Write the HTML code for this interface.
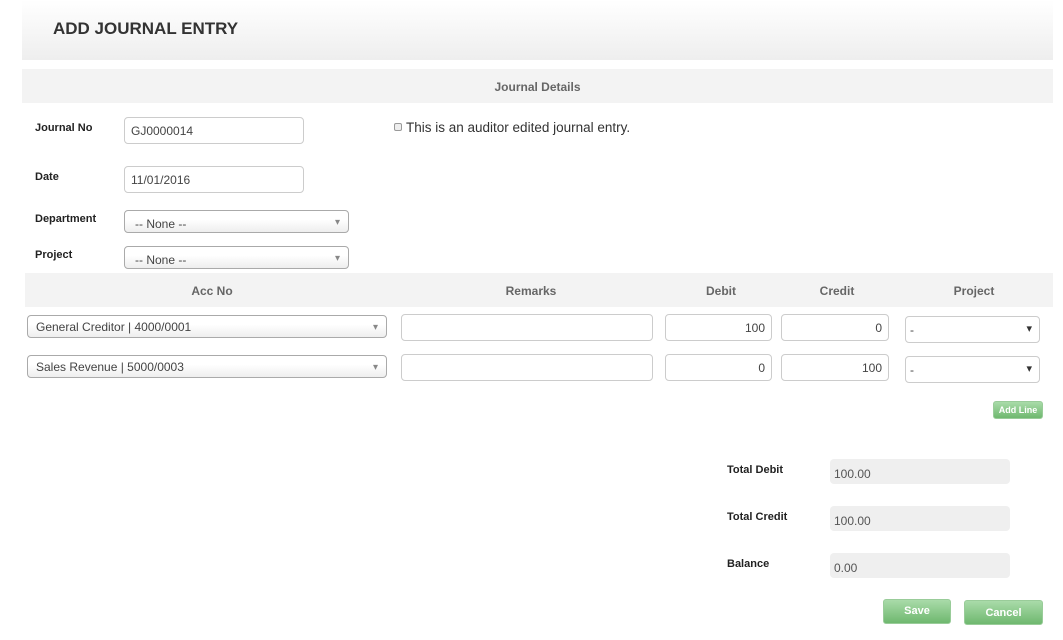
<!DOCTYPE html>
<html><head><meta charset="utf-8"><style>
*{box-sizing:border-box;margin:0;padding:0}
body{width:1063px;height:640px;background:#fff;font-family:"Liberation Sans",sans-serif;position:relative;overflow:hidden;color:#222}
.a{position:absolute}
.hdr{left:22px;top:0;width:1031px;height:60px;background:linear-gradient(#fff,#eee)}
.title{left:53px;top:19px;font-size:17px;font-weight:bold;color:#333}
.bar{left:22px;top:69px;width:1031px;height:34px;background:#f3f3f3}
.lbl{font-size:11px;font-weight:bold;color:#222}
.inp{border:1px solid #ccc;border-radius:4px;background:#fff;font-size:12px;color:#444;padding-left:6px;display:flex;align-items:center}
.sel{border:1px solid #aaa;border-radius:4px;background:linear-gradient(#fff 40%,#eee);font-size:12px;color:#444;padding:6px 0 0 10px}
.sel:after{content:"▾";position:absolute;right:8px;top:6px;font-size:10px;color:#888}
.num{justify-content:flex-end;padding-right:6px;padding-left:0}
.th{font-size:12px;font-weight:bold;color:#666;text-align:center}
.ps{border:1px solid #ccc;border-radius:4px;background:#fff;font-size:12px;color:#444;padding:6px 0 0 4px}
.ps:after{content:"▾";position:absolute;right:7px;top:5px;font-size:11px;color:#333}
.tot{background:#efefef;border-radius:4px;font-size:12px;color:#555;padding:8px 0 0 4px}
.btn{background:linear-gradient(#a9dba9,#6fb86f);border:1px solid #9c9;border-radius:3px;color:#fff;font-weight:bold;font-size:11px;text-align:center}
</style></head><body>
<div class="a hdr"></div>
<div class="a title">ADD JOURNAL ENTRY</div>
<div class="a bar"></div>
<div class="a" style="left:22px;top:80px;width:1031px;text-align:center;font-size:12px;font-weight:bold;color:#666">Journal Details</div>

<div class="a lbl" style="left:35px;top:122px">Journal No</div>
<div class="a inp" style="left:124px;top:117px;width:180px;height:27px">GJ0000014</div>
<div class="a" style="left:394px;top:123px;width:8px;height:8px;border:1px solid #999;border-radius:2px;background:#eee"></div>
<div class="a" style="left:406px;top:120px;font-size:13.5px;color:#333">This is an auditor edited journal entry.</div>

<div class="a lbl" style="left:35px;top:171px">Date</div>
<div class="a inp" style="left:124px;top:166px;width:180px;height:27px">11/01/2016</div>

<div class="a lbl" style="left:35px;top:213px">Department</div>
<div class="a sel" style="left:124px;top:210px;width:225px;height:23px">-- None --</div>
<div class="a lbl" style="left:35px;top:249px">Project</div>
<div class="a sel" style="left:124px;top:246px;width:225px;height:23px">-- None --</div>

<div class="a" style="left:25px;top:273px;width:1028px;height:34px;background:#f3f3f3"></div>
<div class="a th" style="left:112px;top:284px;width:200px">Acc No</div>
<div class="a th" style="left:431px;top:284px;width:200px">Remarks</div>
<div class="a th" style="left:665px;top:284px;width:112px">Debit</div>
<div class="a th" style="left:781px;top:284px;width:112px">Credit</div>
<div class="a th" style="left:905px;top:284px;width:138px">Project</div>

<div class="a sel" style="left:27px;top:315px;width:360px;height:23px;padding:4px 0 0 8px">General Creditor | 4000/0001</div>
<div class="a inp" style="left:401px;top:314px;width:252px;height:27px"></div>
<div class="a inp num" style="left:665px;top:314px;width:107px;height:27px">100</div>
<div class="a inp num" style="left:781px;top:314px;width:108px;height:27px">0</div>
<div class="a ps" style="left:905px;top:316px;width:135px;height:27px">-</div>

<div class="a sel" style="left:27px;top:355px;width:360px;height:23px;padding:4px 0 0 8px">Sales Revenue | 5000/0003</div>
<div class="a inp" style="left:401px;top:354px;width:252px;height:27px"></div>
<div class="a inp num" style="left:665px;top:354px;width:107px;height:27px">0</div>
<div class="a inp num" style="left:781px;top:354px;width:108px;height:27px">100</div>
<div class="a ps" style="left:905px;top:356px;width:135px;height:27px">-</div>

<div class="a btn" style="left:993px;top:401px;width:50px;height:18px;font-size:9px;line-height:16px">Add Line</div>

<div class="a lbl" style="left:727px;top:464px">Total Debit</div>
<div class="a tot" style="left:830px;top:459px;width:180px;height:25px">100.00</div>
<div class="a lbl" style="left:727px;top:511px">Total Credit</div>
<div class="a tot" style="left:830px;top:506px;width:180px;height:25px">100.00</div>
<div class="a lbl" style="left:727px;top:558px">Balance</div>
<div class="a tot" style="left:830px;top:553px;width:180px;height:25px">0.00</div>

<div class="a btn" style="left:883px;top:599px;width:68px;height:25px;line-height:23px">Save</div>
<div class="a btn" style="left:964px;top:600px;width:79px;height:25px;line-height:24px">Cancel</div>
</body></html>
